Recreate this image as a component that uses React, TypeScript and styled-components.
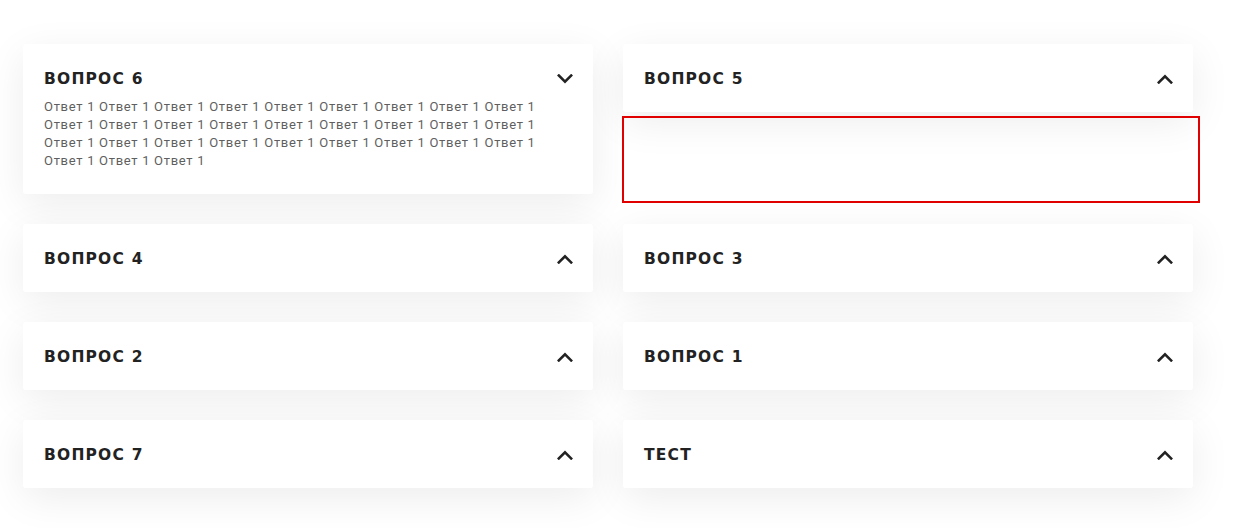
import React from "react";
import styled, { createGlobalStyle } from "styled-components";

const Global = createGlobalStyle`
  html, body { margin: 0; padding: 0; background: #ffffff; }
  body { font-family: "Roboto", "Liberation Sans", sans-serif; }
`;

const Page = styled.div`
  padding: 44px 0 40px 23px;
`;

const Grid = styled.div`
  display: grid;
  grid-template-columns: 570px 570px;
  column-gap: 30px;
  row-gap: 30px;
  align-items: start;
`;

const Slot = styled.div`
  position: relative;
`;

const Card = styled.div`
  background: #fff;
  border-radius: 3px;
  box-shadow: 0 10px 40px rgba(0, 0, 0, 0.075);
  padding: 25px 20px 23px 21px;
  box-sizing: border-box;
  min-height: 68px;
`;

const Header = styled.div`
  display: flex;
  align-items: center;
  justify-content: space-between;
  height: 20px;
`;

const Title = styled.div`
  font-family: "DejaVu Sans", sans-serif;
  font-weight: 700;
  font-size: 15.5px;
  letter-spacing: 1.2px;
  color: #222;
  text-transform: uppercase;
`;

const Answer = styled.div`
  margin-top: 9px;
  margin-bottom: 1px;
  font-family: "Roboto", sans-serif;
  font-size: 13px;
  letter-spacing: 0.7px;
  line-height: 18px;
  color: #5f5f5f;
  padding-right: 8px;
`;

const Highlight = styled.div`
  position: absolute;
  left: -1px;
  top: 72px;
  width: 578px;
  height: 87px;
  box-sizing: border-box;
  border: 2px solid #e00000;
  pointer-events: none;
`;

const Chevron = ({ up }: { up: boolean }) => (
  <svg width="16" height="10" viewBox="0 0 16 10" fill="none">
    {up ? (
      <path d="M1.8 8.5 L8 2.3 L14.2 8.5" stroke="#222" strokeWidth="2.5" strokeLinecap="square" />
    ) : (
      <path d="M1.8 1.5 L8 7.7 L14.2 1.5" stroke="#222" strokeWidth="2.5" strokeLinecap="square" />
    )}
  </svg>
);

type Item = { title: string; answer?: string; highlight?: boolean };

const answer = Array.from({ length: 30 }, () => "Ответ 1").join(" ");

const items: Item[] = [
  { title: "Вопрос 6", answer },
  { title: "Вопрос 5", highlight: true },
  { title: "Вопрос 4" },
  { title: "Вопрос 3" },
  { title: "Вопрос 2" },
  { title: "Вопрос 1" },
  { title: "Вопрос 7" },
  { title: "Тест" },
];

export default function App() {
  return (
    <>
      <Global />
      <Page>
        <Grid>
          {items.map((it) => (
            <Slot key={it.title}>
              <Card>
                <Header>
                  <Title>{it.title}</Title>
                  <Chevron up={!it.answer} />
                </Header>
                {it.answer && <Answer>{it.answer}</Answer>}
              </Card>
              {it.highlight && <Highlight />}
            </Slot>
          ))}
        </Grid>
      </Page>
    </>
  );
}
